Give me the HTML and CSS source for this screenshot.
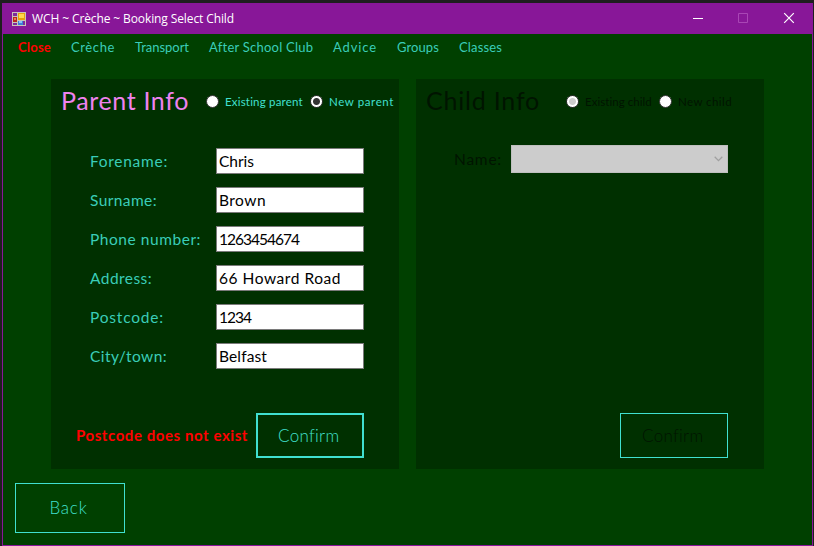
FILE: index.html
```
<!DOCTYPE html>
<html lang="en">
<head>
<meta charset="utf-8">
<title>WCH ~ Crèche ~ Booking Select Child</title>
<link rel="stylesheet" href="styles.css">
</head>
<body>
<div class="window">
  <header class="titlebar">
    <svg class="app-icon" width="14" height="14" viewBox="0 0 14 14" shape-rendering="crispEdges">
      <rect x=".5" y=".5" width="13" height="13" fill="#7d2b9b" stroke="#c9c4b8"/>
      <path d="M5.5 1v12M1 4.5h4M1 10.5h4M6 8.5h7" stroke="#c9c4b8" fill="none"/>
      <rect x="6" y="1" width="7" height="7" fill="#e8a30c"/><rect x="7" y="2" width="5" height="4" fill="#ffd84f"/>
      <rect x="1" y="5" width="4" height="5" fill="#b7281d"/><rect x="2" y="6" width="2" height="2" fill="#ee7a55"/>
      <rect x="6" y="9" width="5" height="4" fill="#3d7fd9"/><rect x="7" y="9" width="3" height="2" fill="#8fc0f5"/>
    </svg>
    <span class="title" data-fit="202">WCH ~ Crèche ~ Booking Select Child</span>
    <div class="controls">
      <svg width="46" height="30" viewBox="0 0 46 30"><path d="M18 14.5h10" stroke="#fff"/></svg>
      <svg width="45" height="30" viewBox="0 0 45 30"><path d="M17.5 9.5h9v9h-9z" stroke="#a946b5" fill="none"/></svg>
      <svg width="46" height="30" viewBox="0 0 46 30"><path d="M18.2 9.2l9.6 9.6M27.8 9.2l-9.6 9.6" stroke="#fff" stroke-width="1.2"/></svg>
    </div>
  </header>
  <nav class="menu">
    <span class="close" data-fit="33">Close</span>
    <span data-fit="44">Crèche</span>
    <span data-fit="54">Transport</span>
    <span data-fit="104">After School Club</span>
    <span data-fit="44">Advice</span>
    <span data-fit="42">Groups</span>
    <span data-fit="43">Classes</span>
  </nav>
  <main class="panels">
    <section class="panel">
      <div class="panel-head">
        <h1 data-fit="128">Parent Info</h1>
        <i class="radio"></i><span class="option" data-fit="78">Existing parent</span>
        <i class="radio on"></i><span class="option" data-fit="65">New parent</span>
      </div>
      <div class="fields">
        <div class="field"><span class="label"><span data-fit="78">Forename:</span></span><div class="input"><span data-fit="35">Chris</span></div></div>
        <div class="field"><span class="label"><span data-fit="67">Surname:</span></span><div class="input"><span data-fit="47">Brown</span></div></div>
        <div class="field"><span class="label"><span data-fit="111">Phone number:</span></span><div class="input"><span data-fit="80">1263454674</span></div></div>
        <div class="field"><span class="label"><span data-fit="62">Address:</span></span><div class="input"><span data-fit="122">66 Howard Road</span></div></div>
        <div class="field"><span class="label"><span data-fit="74">Postcode:</span></span><div class="input"><span data-fit="32">1234</span></div></div>
        <div class="field"><span class="label"><span data-fit="77">City/town:</span></span><div class="input"><span data-fit="48">Belfast</span></div></div>
      </div>
      <div class="actions">
        <span class="error" data-fit="172">Postcode does not exist</span>
        <div class="button focused"><span data-fit="61">Confirm</span></div>
      </div>
    </section>
    <section class="panel disabled">
      <div class="panel-head">
        <h1 data-fit="114">Child Info</h1>
        <i class="radio muted"></i><span class="option" data-fit="67">Existing child</span>
        <i class="radio"></i><span class="option" data-fit="54">New child</span>
      </div>
      <div class="picker">
        <span class="name" data-fit="48">Name:</span>
        <div class="select"><svg width="9" height="6" viewBox="0 0 9 6"><path d="M.7.8l3.8 3.8L8.3.8" fill="none" stroke="#a0a0a0" stroke-width="1.3"/></svg></div>
      </div>
      <div class="actions"><div class="button"><span data-fit="61">Confirm</span></div></div>
    </section>
  </main>
  <div class="button back"><span data-fit="38">Back</span></div>
</div>
<script src="fit.js"></script>
</body>
</html>
```
FILE: styles.css
```
* { box-sizing: border-box; }
body {
  margin: 0;
  height: 546px;
  padding: 3px 1px 0 2px;
  background: #1e1e1e;
  overflow: hidden;
  font-family: Lato, "Liberation Sans", sans-serif;
  color: #40e0d0;
}
.window {
  height: 543px;
  border: 1px solid #881798;
  background: #004000;
}
.titlebar {
  height: 30px;
  display: flex;
  align-items: center;
  background: #881798;
  color: #fff;
  font: 12px/30px "Open Sans", sans-serif;
}
.app-icon { margin: -1px 6px 0 9px; }
.controls { display: flex; margin-left: auto; }
.controls svg { display: block; }
[data-fit] { display: inline-block; white-space: nowrap; flex: none; }
.menu {
  height: 45px;
  padding: 5px 0 0 15px;
  display: flex;
  gap: 20px;
  font-size: 13px;
  line-height: 16px;
}
.menu span { color: #3acdb8; }
.menu .close { color: #f00; font-weight: 700; }
.panels { display: flex; gap: 17px; padding-left: 48px; }
.panel {
  width: 348px;
  height: 390px;
  background: #003000;
  display: flex;
  flex-direction: column;
}
.panel-head {
  height: 45px;
  padding-left: 10px;
  display: flex;
  align-items: center;
}
h1 {
  margin: -3px 17px 0 0;
  font-size: 25px;
  line-height: 30px;
  font-weight: 400;
  color: #ee82ee;
}
.radio {
  width: 13px;
  height: 13px;
  flex: none;
  border: 1px solid #333;
  border-radius: 50%;
  background: #fff;
  margin-right: 6px;
}
.option { font-size: 11.5px; line-height: 14px; margin-right: 7px; }
.radio.on { background: radial-gradient(circle, #333 3px, #fff 4px); }
.radio.muted { background: radial-gradient(circle, #ccc 3px, #fff 4px); }
.fields {
  padding: 24px 35px 0 39px;
  display: grid;
  gap: 13px;
  font-size: 15.5px;
}
.field { display: flex; line-height: 26px; height: 26px; }
.label { width: 126px; color: #3acdb8; }
.input {
  width: 148px;
  padding-left: 2px;
  border: 1px solid #7a7a7a;
  background: #fff;
  color: #000;
  line-height: 25px;
}
.actions {
  margin-top: auto;
  height: 56px;
  padding-right: 35px;
  display: flex;
  justify-content: flex-end;
  gap: 8px;
}
.error { color: #f00; font-size: 15px; font-weight: 700; line-height: 45px; }
.button {
  width: 108px;
  height: 45px;
  padding: 0 3px 0 0;
  border: 1px solid #40e0d0;
  display: flex;
  align-items: center;
  justify-content: center;
  font-size: 17px;
  font-weight: 300;
}
.button.focused { border-width: 2px; }
.back { width: 110px; height: 50px; margin: 14px 0 0 12px; padding-bottom: 1px; }
.disabled, .disabled h1 { color: #001400; }
.disabled h1 { margin-right: 26px; }
.disabled .actions { padding-right: 36px; }
.picker {
  padding: 21px 36px 0 38px;
  display: flex;
  justify-content: space-between;
  font-size: 15.5px;
  line-height: 29px;
}
.select {
  width: 217px;
  height: 28px;
  border: 1px solid #bfbfbf;
  background: #ccc;
  padding-right: 4px;
  display: flex;
  align-items: center;
  justify-content: flex-end;
}
```
FILE: fit.js
```
// Track each run of text so that it fills its nominal width.
document.querySelectorAll('[data-fit]').forEach(function (el) {
  var target = Number(el.dataset.fit);
  var count = el.textContent.length;
  var spacing = (target - el.getBoundingClientRect().width) / count;
  el.style.letterSpacing = spacing + 'px';
  el.style.width = target + 'px';
});
```
